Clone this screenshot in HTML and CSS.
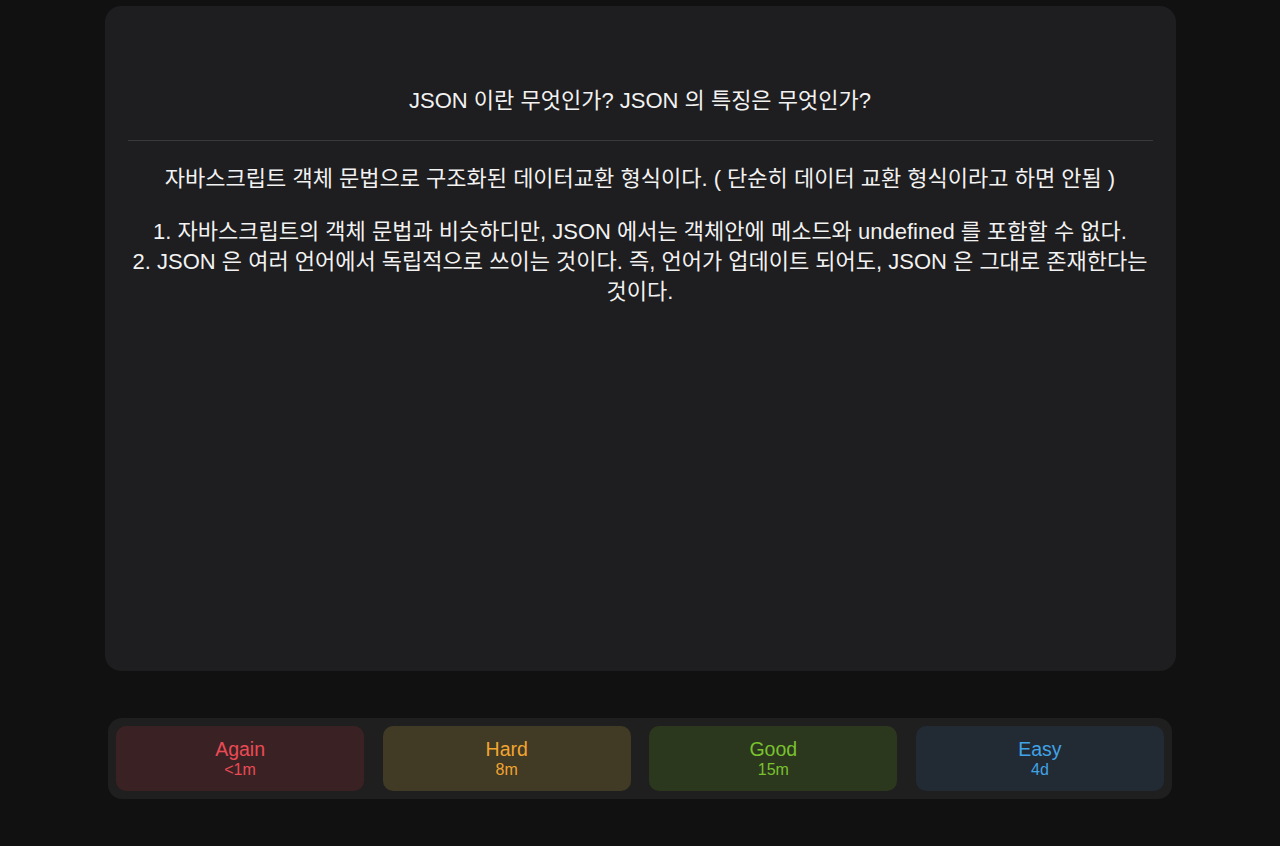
FILE: index.html
```html
<!DOCTYPE html>
<html lang="ko">
<head>
<meta charset="utf-8">
<link rel="stylesheet" href="styles.css">
</head>
<body>
<main class="page">
  <section class="card">
    <div class="question">JSON 이란 무엇인가? JSON 의 특징은 무엇인가?</div>
    <hr class="divider">
    <div class="answer">
      <p class="para">자바스크립트 객체 문법으로 구조화된 데이터교환 형식이다. ( 단순히 데이터 교환 형식이라고 하면 안됨 )</p>
      <p class="para">1. 자바스크립트의 객체 문법과 비슷하디만, JSON 에서는 객체안에 메소드와 undefined 를 포함할 수 없다.<br>2. JSON 은 여러 언어에서 독립적으로 쓰이는 것이다. 즉, 언어가 업데이트 되어도, JSON 은 그대로 존재한다는 것이다.</p>
    </div>
  </section>
  <nav class="answers">
    <button class="btn again"><span class="label">Again</span><span class="time">&lt;1m</span></button>
    <button class="btn hard"><span class="label">Hard</span><span class="time">8m</span></button>
    <button class="btn good"><span class="label">Good</span><span class="time">15m</span></button>
    <button class="btn easy"><span class="label">Easy</span><span class="time">4d</span></button>
  </nav>
</main>
</body>
</html>
```
FILE: styles.css
```css
html, body {
  margin: 0;
  padding: 0;
  background: #111111;
  font-family: "Liberation Sans", "Noto Sans CJK KR", sans-serif;
  color: #f2f2f2;
}
.page {
  width: 1071px;
  margin: 0 auto;
  padding-top: 6px;
  display: flex;
  flex-direction: column;
  align-items: center;
}
.card {
  box-sizing: border-box;
  width: 1071px;
  height: 665px;
  background: #1e1d1f;
  border-radius: 16px;
  padding: 0 23px;
}
.question {
  margin-top: 80px;
  font-size: 22px;
  line-height: 30px;
  text-align: center;
  word-break: keep-all;
}
.divider {
  border: 0;
  height: 1px;
  background: #3a393b;
  margin: 24px 0 0;
}
.answer {
  margin-top: 23px;
  font-size: 22px;
  line-height: 30px;
  text-align: center;
  word-break: keep-all;
}
.para {
  margin: 0 0 23px;
}
.answers {
  box-sizing: border-box;
  margin-top: 47px;
  width: 1064px;
  height: 81px;
  background: #1f1f1f;
  border-radius: 14px;
  padding: 8px;
  display: grid;
  grid-template-columns: repeat(4, 1fr);
  gap: 18.5px;
}
.btn {
  border: 0;
  border-radius: 10px;
  display: flex;
  flex-direction: column;
  align-items: center;
  justify-content: center;
  font-family: inherit;
  padding: 0;
}
.label {
  font-size: 19.5px;
  line-height: 22px;
}
.time {
  font-size: 16px;
  line-height: 19px;
}
.again { background: #3a2224; color: #eb4a55; }
.hard { background: #413a25; color: #f2a531; }
.good { background: #2c381d; color: #79c130; }
.easy { background: #222a34; color: #40a3e6; }
```
